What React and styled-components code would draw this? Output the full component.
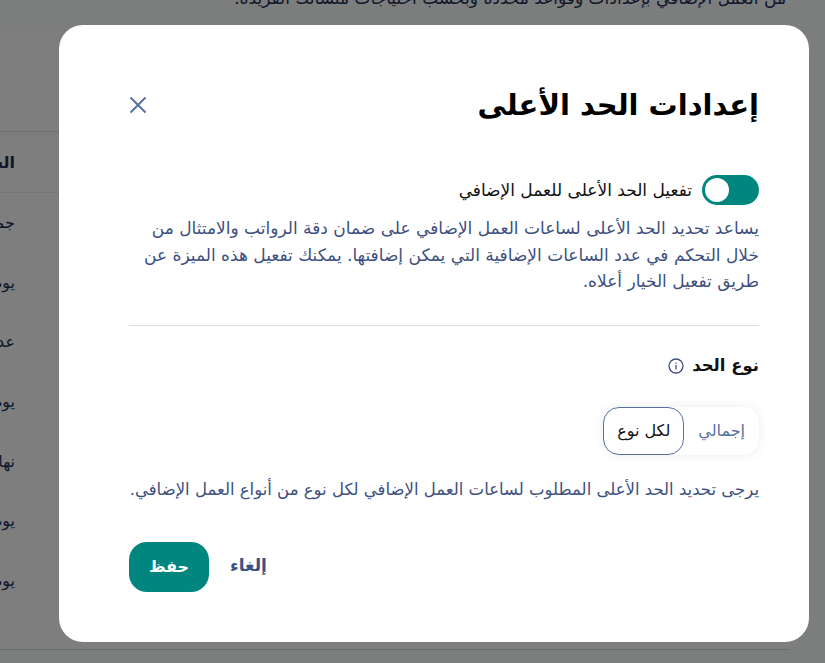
import React from 'react';
import styled, { createGlobalStyle } from 'styled-components';

const GlobalStyle = createGlobalStyle`
  html, body { margin: 0; padding: 0; height: 100%; overflow: hidden; }
  body { font-family: 'DejaVu Sans', 'Noto Sans', sans-serif; background: #fff; }
  #root { height: 100%; }
`;

const Page = styled.div`
  position: relative;
  width: 825px;
  height: 663px;
  overflow: hidden;
  direction: rtl;
  background: #f9fafb;
`;

const Intro = styled.p`
  margin: -14px 39px 0 0;
  height: 44px;
  font-size: 17px;
  line-height: 24px;
  white-space: nowrap;
  color: #1f2f55;
`;

const TablePanel = styled.div`
  margin-right: 36px;
  background: #fdfdfd;
  border-top: 1px solid #f6f6f6;
  padding-top: 100px;
  box-sizing: border-box;
`;

const HeadRow = styled.div`
  height: 60px;
  display: flex;
  align-items: center;
  padding-right: 774px;
  white-space: nowrap;
  border-top: 1px solid #d8dbe6;
  border-bottom: 1px solid #e8eaf2;
  font-size: 16px;
  font-weight: 700;
  color: #1f2f55;
`;

const Row = styled.div`
  height: 59.6px;
  display: flex;
  align-items: center;
  padding-right: 774px;
  white-space: nowrap;
  font-size: 16px;
  color: #1f2f55;
`;

const TableEnd = styled.div`
  height: 1px;
  margin-top: 39px;
  background: #d8dbe6;
`;

const Overlay = styled.div`
  position: absolute;
  inset: 0;
  background: rgba(0, 0, 0, 0.5);
  display: flex;
`;

const Modal = styled.div`
  box-sizing: border-box;
  width: 750px;
  height: 617px;
  margin: 25px 16px 0 0;
  background: #fff;
  border-radius: 24px;
  padding: 55px 50px 50px 70px;
  display: flex;
  flex-direction: column;
`;

const Header = styled.div`
  display: flex;
  align-items: center;
  justify-content: space-between;
  height: 50px;
`;

const Title = styled.h2`
  margin: 0;
  font-size: 29px;
  font-weight: 700;
  color: #000;
`;

const CloseButton = styled.button`
  border: 0;
  padding: 0;
  background: none;
  display: flex;
  color: #5a72a0;
`;

const ToggleRow = styled.div`
  display: flex;
  align-items: center;
  gap: 10px;
  margin-top: 45px;
  font-size: 17px;
  color: #111;
`;

const Track = styled.span`
  box-sizing: border-box;
  width: 57px;
  height: 30px;
  border-radius: 15px;
  background: #00857f;
  padding: 3px;
  display: flex;
  justify-content: flex-end;
`;

const Knob = styled.span`
  width: 24px;
  height: 24px;
  border-radius: 50%;
  background: #fff;
`;

const Description = styled.p`
  margin: 10px 0 0;
  font-size: 17px;
  line-height: 26.5px;
  white-space: nowrap;
  color: #3d5080;
`;

const Divider = styled.hr`
  width: 100%;
  margin: 30px 0 0;
  border: 0;
  border-top: 1px solid #dcdcdc;
`;

const SectionTitle = styled.div`
  display: flex;
  align-items: center;
  gap: 8px;
  margin-top: 27px;
  height: 26px;
  font-size: 16.5px;
  font-weight: 700;
  color: #111;
`;

const InfoIcon = styled.svg`
  width: 16px;
  height: 16px;
  color: #3d5080;
`;

const Segmented = styled.div`
  align-self: flex-start;
  display: flex;
  margin-top: 28px;
  height: 48px;
  background: #fff;
  border-radius: 16px;
  box-shadow: 0 0 10px rgba(90, 114, 160, 0.14);
`;

const Segment = styled.button`
  box-sizing: border-box;
  height: 48px;
  padding: 0 ${p => (p.$active ? '13px' : '14px')};
  border: ${p => (p.$active ? '1px solid #5a72a0' : '0')};
  border-radius: 16px;
  background: #fff;
  font-family: inherit;
  font-size: 16px;
  color: ${p => (p.$active ? '#111' : '#5a72a0')};
`;

const Hint = styled.p`
  margin: 23px 0 0;
  font-size: 16.5px;
  line-height: 24px;
  white-space: nowrap;
  color: #3d5080;
`;

const Actions = styled.div`
  display: flex;
  align-items: center;
  justify-content: flex-end;
  gap: 21px;
  margin-top: 40px;
`;

const CancelButton = styled.button`
  border: 0;
  padding: 0 0 3px;
  background: none;
  font-family: inherit;
  font-size: 17px;
  font-weight: 700;
  color: #3d5080;
`;

const SaveButton = styled.button`
  width: 80px;
  height: 50px;
  border: 0;
  border-radius: 18px;
  background: #00857f;
  font-family: inherit;
  font-size: 16px;
  font-weight: 700;
  color: #fff;
`;

const days = ['جمعة', 'يوم', 'عدد', 'يوم', 'نهاية', 'يوم', 'يوم'];

export default function App() {
  return (
    <Page>
      <GlobalStyle />
      <Intro>من العمل الإضافي بإعدادات وقواعد محددة وبحسب احتياجات منشأتك الفريدة.</Intro>
      <TablePanel>
        <HeadRow>السجل</HeadRow>
        {days.map((d, i) => (
          <Row key={i}>{d}</Row>
        ))}
        <TableEnd />
      </TablePanel>
      <Overlay>
        <Modal>
          <Header>
            <Title>إعدادات الحد الأعلى</Title>
            <CloseButton aria-label="إغلاق">
              <svg width="18" height="18" viewBox="0 0 18 18" fill="none" stroke="currentColor" strokeWidth="2">
                <path d="M1.5 1.5 16.5 16.5M16.5 1.5 1.5 16.5" />
              </svg>
            </CloseButton>
          </Header>
          <ToggleRow>
            <Track><Knob /></Track>
            تفعيل الحد الأعلى للعمل الإضافي
          </ToggleRow>
          <Description>
            يساعد تحديد الحد الأعلى لساعات العمل الإضافي على ضمان دقة الرواتب والامتثال من
            <br />
            خلال التحكم في عدد الساعات الإضافية التي يمكن إضافتها. يمكنك تفعيل هذه الميزة عن
            <br />
            طريق تفعيل الخيار أعلاه.
          </Description>
          <Divider />
          <SectionTitle>
            نوع الحد
            <InfoIcon viewBox="0 0 16 16" fill="none" stroke="currentColor" strokeWidth="1.3" strokeLinecap="round">
              <circle cx="8" cy="8" r="7" />
              <path d="M8 7.3v3.6M8 5v.2" />
            </InfoIcon>
          </SectionTitle>
          <Segmented>
            <Segment>إجمالي</Segment>
            <Segment $active>لكل نوع</Segment>
          </Segmented>
          <Hint>يرجى تحديد الحد الأعلى المطلوب لساعات العمل الإضافي لكل نوع من أنواع العمل الإضافي.</Hint>
          <Actions>
            <CancelButton>إلغاء</CancelButton>
            <SaveButton>حفظ</SaveButton>
          </Actions>
        </Modal>
      </Overlay>
    </Page>
  );
}
